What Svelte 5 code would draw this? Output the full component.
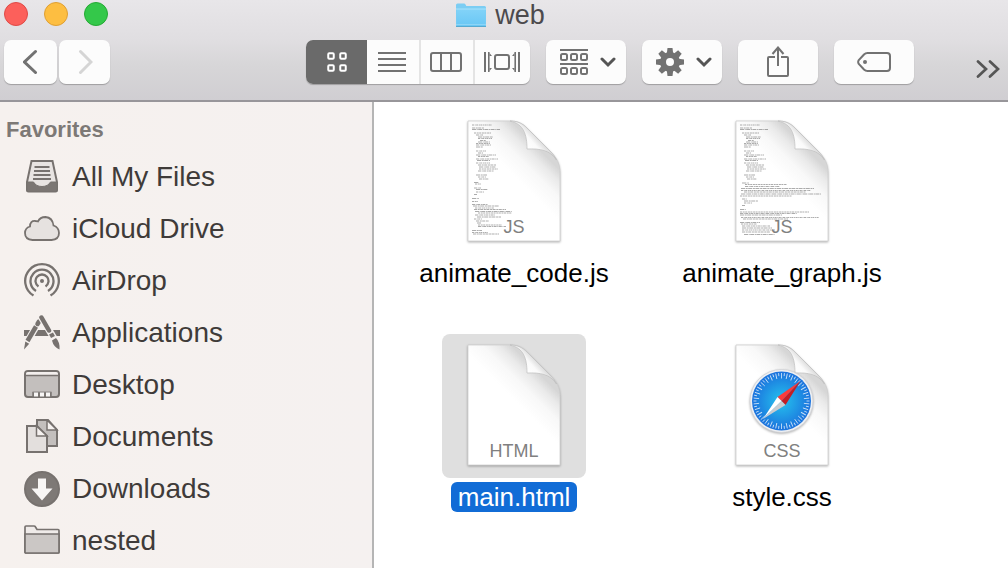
<script>
  const codeTop = [
    [4, 4, 20], [4, 7, 12], [4, 8.5, 28], [6, 12, 17], [8, 14, 7], [10, 16, 15],
    [10, 17.5, 14], [12, 19.5, 6], [10, 21, 12], [8, 22.5, 14], [8, 24, 15], [8, 26, 7],
    [8, 30, 10], [10, 32, 5], [8, 34, 20], [10, 35.5, 11], [8, 38, 22], [9, 39.5, 13],
    [8, 42, 14], [10, 44, 18], [11, 46, 17], [11, 48, 19], [10, 50, 16], [8, 54, 11],
    [10, 56, 8], [11, 58, 10]
  ]
  const codeRows = [
    ...codeTop, [6, 61.5, 5], [7, 63, 6], [6, 67, 7], [8, 68.5, 12], [8, 71, 8], [6, 73.5, 3],
    [4, 77.5, 7], [4, 80.5, 6], [4, 83.5, 16], [5, 85, 26], [7, 87, 19], [6, 88.5, 32],
    [7, 90.5, 37], [10, 92, 34], [7, 94, 20], [9, 96, 24], [6, 98, 8], [8, 100, 13],
    [9, 102, 4], [10, 104, 24], [10, 105.5, 28], [4, 109.5, 10], [4, 111.5, 16], [5, 113, 26]
  ]
  const graphRows = [
    ...codeTop, [6, 62, 7], [9, 63.5, 42], [9, 65.5, 35], [5, 67.5, 73], [5, 69.5, 70], [8, 71, 62],
    [5, 73, 80], [4, 75, 52], [6, 78, 5], [8, 80, 14], [8, 82, 8], [6, 84.5, 3],
    [4, 88.5, 6], [4, 91, 69], [4, 92.5, 57], [4, 94, 42], [5, 96.5, 78], [7, 98, 45],
    [4, 101.5, 20], [5, 103, 16], [6, 105, 28], [6, 107, 30], [6, 109, 33], [6, 111, 28], [8, 113.5, 31]
  ]
  const files = [
    { name: 'animate_code.js', kind: 'JS', rows: codeRows },
    { name: 'animate_graph.js', kind: 'JS', rows: graphRows },
    { name: 'main.html', kind: 'HTML', rows: [] },
    { name: 'style.css', kind: 'CSS', rows: [], compass: true }
  ]
  const places = [
    ['All My Files', 'files'], ['iCloud Drive', 'cloud'], ['AirDrop', 'airdrop'], ['Applications', 'apps'],
    ['Desktop', 'desktop'], ['Documents', 'documents'], ['Downloads', 'downloads'], ['nested', 'folder']
  ]
  const views = ['icons', 'list', 'columns', 'cover flow']
  const teeth = [0, 45, 90, 135, 180, 225, 270, 315]
  const ticks = Array.from({ length: 60 }, (_, i) => i)
  let selected = $state('main.html')
  let view = $state('icons')
</script>

{#snippet arrow()}
  <svg class="ink" width="16" height="12"><path d="M2 3 8 9 14 3" stroke-width="3" stroke-linecap="round" stroke="#555" /></svg>
{/snippet}

<div class="window">
  <header>
    <div class="titlebar">
      <div class="lights">
        <button class="light close" aria-label="Close"></button>
        <button class="light minimise" aria-label="Minimise"></button>
        <button class="light zoom" aria-label="Zoom"></button>
      </div>
      <h1>
        <svg width="32" height="26" viewBox="0 0 32 26">
          <defs>
            <linearGradient id="folder" x2="0" y2="1"><stop offset="0" stop-color="#83d3f8" /><stop offset="1" stop-color="#69c7f5" /></linearGradient>
          </defs>
          <path d="M1 24.500V3q0-1.500 1.500-1.500H9q1 0 1.500 1l.8 1.500H29.500Q31 4 31 5.500V24.500Z" fill="#7ccdf3" />
          <path d="M1.500 7H30.500V24H1.500Z" fill="url(#folder)" />
          <path d="M1 7H31" stroke="#a9e2fb" /><path d="M1 22.500H31" stroke="#8dd5f6" />
          <path d="M1 24.500H31" stroke="#57a9cf" />
        </svg>
        web
      </h1>
    </div>

    <div class="toolbar">
      <div class="nav">
        <button class="tool back" aria-label="Back">
          <svg class="ink" width="16" height="26"><path d="M12.500 2.500 1.500 13 12.500 23.500" stroke-width="3" stroke-linecap="round" /></svg>
        </button>
        <button class="tool forward" aria-label="Forward" disabled>
          <svg class="ink" width="16" height="26"><path d="M3.500 2.500 14 13 3.500 23.500" stroke-width="3" stroke-linecap="round" stroke="#d5d5d5" /></svg>
        </button>
      </div>
      <div class="space wide"></div>
      <div class="tools">
        <div class="views" role="group" aria-label="View">
          {#each views as v}
            <button aria-label={v} aria-pressed={view === v} class:on={view === v} onclick={() => (view = v)}>
              {#if v === 'icons'}
                <svg class="ink" width="20" height="20" stroke-width="2.500">
                  {#each [1.25, 13.25] as x}{#each [1.25, 13.25] as y}<rect {x} {y} width="5.500" height="5.500" rx="1" />{/each}{/each}
                </svg>
              {:else if v === 'list'}
                <svg class="ink" width="28" height="20"><path d="M0 1H28M0 7H28M0 13H28M0 19H28" /></svg>
              {:else if v === 'columns'}
                <svg class="ink" width="32" height="20"><rect x="1" y="1" width="30" height="18" rx="2" /><path d="M11 1V19M21 1V19" /></svg>
              {:else}
                <svg class="ink" width="36" height="20">
                  <path d="M1 0V20M35 0V20" />
                  <path d="M4.800 0V20M31.200 0V20" stroke-width="1.600" />
                  <path d="M5.500 1 8 4H5.500ZM5.500 19 8 16H5.500ZM30.500 1 28 4H30.500ZM30.500 19 28 16H30.500Z" fill="#727272" stroke="none" />
                  <rect x="11" y="3" width="14" height="14" rx="2" />
                </svg>
              {/if}
            </button>
          {/each}
        </div>
        <button class="tool menu" aria-label="Arrange" aria-haspopup="menu">
          <svg class="ink" width="28" height="26">
            <path d="M0 1H28M0 15H28" />
            {#each [1, 11, 21] as x}{#each [5, 19] as y}<rect {x} {y} width="6" height="6" rx="1.500" />{/each}{/each}
          </svg>
          {@render arrow()}
        </button>
        <button class="tool menu" aria-label="Action" aria-haspopup="menu">
          <svg width="28" height="28" viewBox="-14 -14 28 28">
            <circle r="7" fill="none" stroke="#727272" stroke-width="6" />
            {#each teeth as a}<path d="M-3.200-8.500-2.500-14H2.500L3.200-8.500Z" fill="#727272" transform="rotate({a})" />{/each}
          </svg>
          {@render arrow()}
        </button>
        <button class="tool" aria-label="Share">
          <svg class="ink" width="22" height="32">
            <path d="M8 11H2Q1 11 1 12V29Q1 30 2 30H20Q21 30 21 29V12Q21 11 20 11H14M11 2V20M5.500 8 11 1.500 16.500 8" />
          </svg>
        </button>
        <button class="tool" aria-label="Tags">
          <svg class="ink" width="34" height="20">
            <path d="M10.500 1H30Q33 1 33 4V16Q33 19 30 19H10.500Q8.500 19 7 17.500L1.800 12Q.500 10 1.800 8L7 2.500Q8.500 1 10.500 1Z" />
            <circle cx="8" cy="10" r="2" fill="#727272" stroke="none" />
          </svg>
        </button>
      </div>
      <div class="space"></div>
      <button class="more" aria-label="More">
        <svg class="ink" width="24" height="18"><path d="M2 1.500 10 9 2 16.500M14 1.500 22 9 14 16.500" stroke="#555" stroke-width="2.700" stroke-linecap="round" /></svg>
      </button>
    </div>
  </header>

  <div class="body">
    <nav aria-label="Favorites">
      <h2>Favorites</h2>
      <ul>
        {#each places as [label, icon]}
          <li>
            <a href="#{icon}">
              <svg class="place" width="36" height="36" viewBox="0 0 36 36">
                {#if icon === 'files'}
                  <path d="M7.500 2H28.500L33 23V31Q33 32.500 31.500 32.500H4.500Q3 32.500 3 31V23Z" fill="#e8e4e2" />
                  <path d="M3 23H9.500Q12 27.500 18 27.500T26.500 23H33V31Q33 32.500 31.500 32.500H4.500Q3 32.500 3 31Z" fill="#7b7673" stroke-width="1" />
                  <path d="M10.500 8H25.500M10 12H26M9.500 16H26.500M9 20H27" />
                {:else if icon === 'cloud'}
                  <path d="M8.500 29Q1 28.500 1 22 1 17 6 15.500 6 9.500 11.500 10 12.500 10 14 10.500 16 6 21.500 6 28.500 6.500 29.500 14.500 35 16.500 35 22 35 28.500 27.500 29Z" fill="#e6e2e0" stroke-width="1.800" />
                {:else if icon === 'airdrop'}
                  <path d="M9.500 32.500A16.800 16.800 0 1 1 26.500 32.500M12 28A11.500 11.500 0 1 1 24 28M14.500 23.500A6.500 6.500 0 1 1 21.500 23.500" stroke-width="2.300" />
                  <circle cx="18" cy="18" r="2" fill="#77726f" stroke="none" />
                {:else if icon === 'apps'}
                  <path d="M0 18H36" stroke-width="6" />
                  <path d="M15.500 5.500 3.500 26.500" stroke="#f5f1ef" stroke-width="7" />
                  <path d="M15 6.500 13.500 9" stroke-width="4.500" stroke-linecap="round" />
                  <path d="M12 11.500 3.500 26" stroke-width="4.500" />
                  <path d="M1.300 26.500 5.200 28.800 0 34.500Z" fill="#77726f" stroke="none" />
                  <path d="M17.500 2.500 31 25" stroke="#f5f1ef" stroke-width="7" />
                  <path d="M17.500 2.500 25 15.500" stroke-width="4.500" stroke-linecap="round" />
                  <path d="M27 18.500 29 22" stroke-width="4.500" />
                  <path d="M28 25.500 32 23Q36 27 35.500 34.500 29.500 32 28 25.500Z" fill="#77726f" stroke="none" />
                {:else if icon === 'desktop'}
                  <rect x="1" y="4" width="34" height="26" rx="3" fill="#c3bfbd" />
                  <path d="M2 8V6.500Q2 5 4 5H32Q34 5 34 6.500V8Z" fill="#f3efed" stroke="none" /><path d="M1 8.500H35" stroke-width="1.500" />
                  <path d="M8.500 29V25H27.500V29" fill="#7b7673" stroke="#8c8785" stroke-width="1" />
                  <path d="M10 25.500H14V29.500H10ZM16 25.500H20V29.500H16ZM22 25.500H26V29.500H22Z" fill="#f8f6f5" stroke="none" />
                {:else if icon === 'documents'}
                  <path d="M13 1H24L33 11V27H13Z" fill="#c3bfbd" /><path d="M23 1V11H33Z" fill="#f5f1ef" stroke-width="1.500" />
                  <path d="M3 7H13L23 17V33H3Z" fill="#e3dfdd" /><path d="M12.500 7V17H23Z" fill="#f5f1ef" stroke-width="1.500" />
                {:else if icon === 'downloads'}
                  <circle cx="18" cy="18" r="17" fill="#7e7976" />
                  <path d="M14 7.500H22V17.500H28.500L18 29.500 7.500 17.500H14Z" fill="#f8f6f5" stroke="none" />
                {:else}
                  <path d="M1 29V4Q1 3 2 3H10Q11 3 11.500 4L13 6.500H34Q35 6.500 35 7.500V29Q35 30 34 30H2Q1 30 1 29Z" fill="#efebe9" stroke-width="1.700" />
                  <path d="M1 11H35V29Q35 30 34 30H2Q1 30 1 29Z" fill="#cbc7c5" stroke-width="1.700" />
                {/if}
              </svg>
              {label}
            </a>
          </li>
        {/each}
      </ul>
    </nav>

    <main>
      {#each files as file}
        <button class="file" class:selected={selected === file.name} onclick={() => (selected = file.name)}>
          <span class="thumb">
            <svg width="104" height="132" viewBox="-5 -5 104 132">
              <defs>
                <linearGradient id="sheet" gradientUnits="userSpaceOnUse" x1="68" y1="24" x2="42" y2="50"><stop offset="0" stop-color="#d6d6d6" /><stop offset=".25" stop-color="#eaeaea" /><stop offset=".55" stop-color="#f8f8f8" /><stop offset="1" stop-color="#fff" /></linearGradient>
                <linearGradient id="curl" gradientUnits="userSpaceOnUse" x1="60" y1="28" x2="71" y2="18"><stop offset="0" stop-color="#fff" /><stop offset=".6" stop-color="#fafafa" /><stop offset="1" stop-color="#dedede" /></linearGradient>
                <radialGradient id="dial"><stop offset="0" stop-color="#25c3ee" /><stop offset="1" stop-color="#1b72dd" /></radialGradient>
              </defs>
              <g class="sheet">
                <path d="M1 0H43C50 0 55 2 60 7L83 30C90 37 93 43 93 52V120H1Z" fill="url(#sheet)" stroke="#cfcfcf" stroke-width=".8" />
              </g>
              <path d="M43 0C50 0 55 2 60 7L83 30C86 33 88 36 89.500 39 83 29 73 27.500 60 28 60 14 57 3 43 0Z" fill="url(#curl)" stroke="#bdbdbd" stroke-width=".7" />
              {#each file.rows as [x, y, w], i}
                <path d="M{x + 1} {y}h{w}" stroke="#555" stroke-opacity=".55" stroke-width=".9" stroke-dasharray="{2 + (i % 3)} .7 {1 + (i % 2)} .5" />
              {/each}
              {#if file.compass}
                <g transform="translate(46.500 56)">
                  <g class="sheet"><circle r="31.500" fill="#eef0f3" stroke="#d0d2d6" stroke-width=".8" /></g>
                  <circle r="29.500" fill="url(#dial)" />
                  {#each ticks as i}<path d="M0-28V{i % 2 ? -25 : -22.5}" stroke="#fff" stroke-opacity=".75" stroke-width=".9" transform="rotate({i * 6})" />{/each}
                  <path d="M19-20-4-4 0 0Z" fill="#fb3b3a" /><path d="M19-20 4 4 0 0Z" fill="#c41e24" />
                  <path d="M-18.500 18-4-4 0 0Z" fill="#fff" /><path d="M-18.500 18 4 4 0 0Z" fill="#c9ccd0" />
                </g>
              {/if}
              <text x="47" y="112">{file.kind}</text>
            </svg>
          </span>
          <span class="name">{file.name}</span>
        </button>
      {/each}
    </main>
  </div>
</div>

<style>
  :global(body) { margin: 0; }
  .window { display: flex; flex-direction: column; min-height: 100vh; font-family: "Liberation Sans", Arial, sans-serif; background: #fff; }
  button { font: inherit; border: 0; padding: 0; margin: 0; background: none; }
  h1, h2, ul { margin: 0; padding: 0; font-weight: 400; list-style: none; }
  svg { display: block; flex: none; }

  header { background: linear-gradient(#e8e6e9, #e0dee1 40%, #d7d6d8 65%, #d0ced2); border-bottom: 2px solid #98969a; }
  .titlebar { display: grid; grid-template-columns: 1fr auto 1fr; align-items: center; height: 30px; margin-bottom: 10px; padding: 0 12px 0 4px; }
  .lights { display: flex; gap: 16px; padding-bottom: 2px; }
  .light { width: 24px; height: 24px; border-radius: 50%; }
  .close { background: #fc605b; border: 1px solid #df4a46; }
  .minimise { background: #fdbe41; border: 1px solid #df9f33; }
  .zoom { background: #34c84a; border: 1px solid #25a934; }
  h1 { display: flex; align-items: center; gap: 8px; font-size: 27px; line-height: 30px; color: #4c4a4d; }

  .toolbar { display: flex; height: 44px; padding: 0 8px 16px 4px; }
  .nav { display: flex; gap: 2px; }
  .tools { display: flex; gap: 16px; }
  .space { flex: 31; }
  .wide { flex: 98; }
  .tool, .views { background: #fcfcfc; border-radius: 7px; box-shadow: 0 1px 1px rgba(0, 0, 0, 0.25); }
  .tool { display: flex; align-items: center; justify-content: center; width: 80px; height: 44px; }
  .back { width: 53px; }
  .forward { width: 51px; }
  .menu { gap: 12px; padding-left: 4px; }
  .ink { fill: none; stroke: #727272; stroke-width: 2; }
  .views { display: flex; overflow: hidden; }
  .views button { display: flex; align-items: center; justify-content: center; width: 54px; padding-right: 2px; border-left: 2px solid #e4e4e4; }
  .views button:first-child { width: 61px; padding-right: 0; border-left: 0; }
  .views button:nth-child(2) { width: 52px; border-left: 0; }
  .views button:last-child { width: 57px; }
  .views .on { background: #6a6a6a; }
  .on .ink { stroke: #fff; }
  .more { align-self: flex-end; padding-bottom: 6px; }

  .body { display: flex; flex: 1; }
  nav { flex: none; width: 372px; border-right: 2px solid #b5b5b5; background: linear-gradient(90deg, #f6f1ee, #f5f1f0); }
  h2 { padding: 14px 6px 7px; font-size: 22px; line-height: 28px; font-weight: 700; color: #7d7976; }
  a { display: flex; align-items: center; gap: 12px; height: 52px; padding-left: 24px; font-size: 28px; color: #3f3b39; text-decoration: none; }
  .place { fill: none; stroke: #77726f; stroke-width: 2; }

  main { flex: 1; display: grid; grid-template-columns: repeat(auto-fill, 268px); align-content: start; row-gap: 46px; padding: 8px 0 0 6px; }
  .file { display: flex; flex-direction: column; align-items: center; gap: 4px; color: #000; }
  .thumb { display: flex; align-items: center; justify-content: center; width: 144px; height: 144px; border-radius: 8px; }
  .name { padding: 0 7px; border-radius: 6px; font-size: 26px; line-height: 30px; }
  .selected .thumb { background: #dfdfdf; }
  .selected .name { background: #116cd6; color: #fff; }
  .sheet { filter: drop-shadow(0 1px 1px rgba(0, 0, 0, 0.3)); }
  text { font-size: 18px; fill: #808080; text-anchor: middle; }
</style>
